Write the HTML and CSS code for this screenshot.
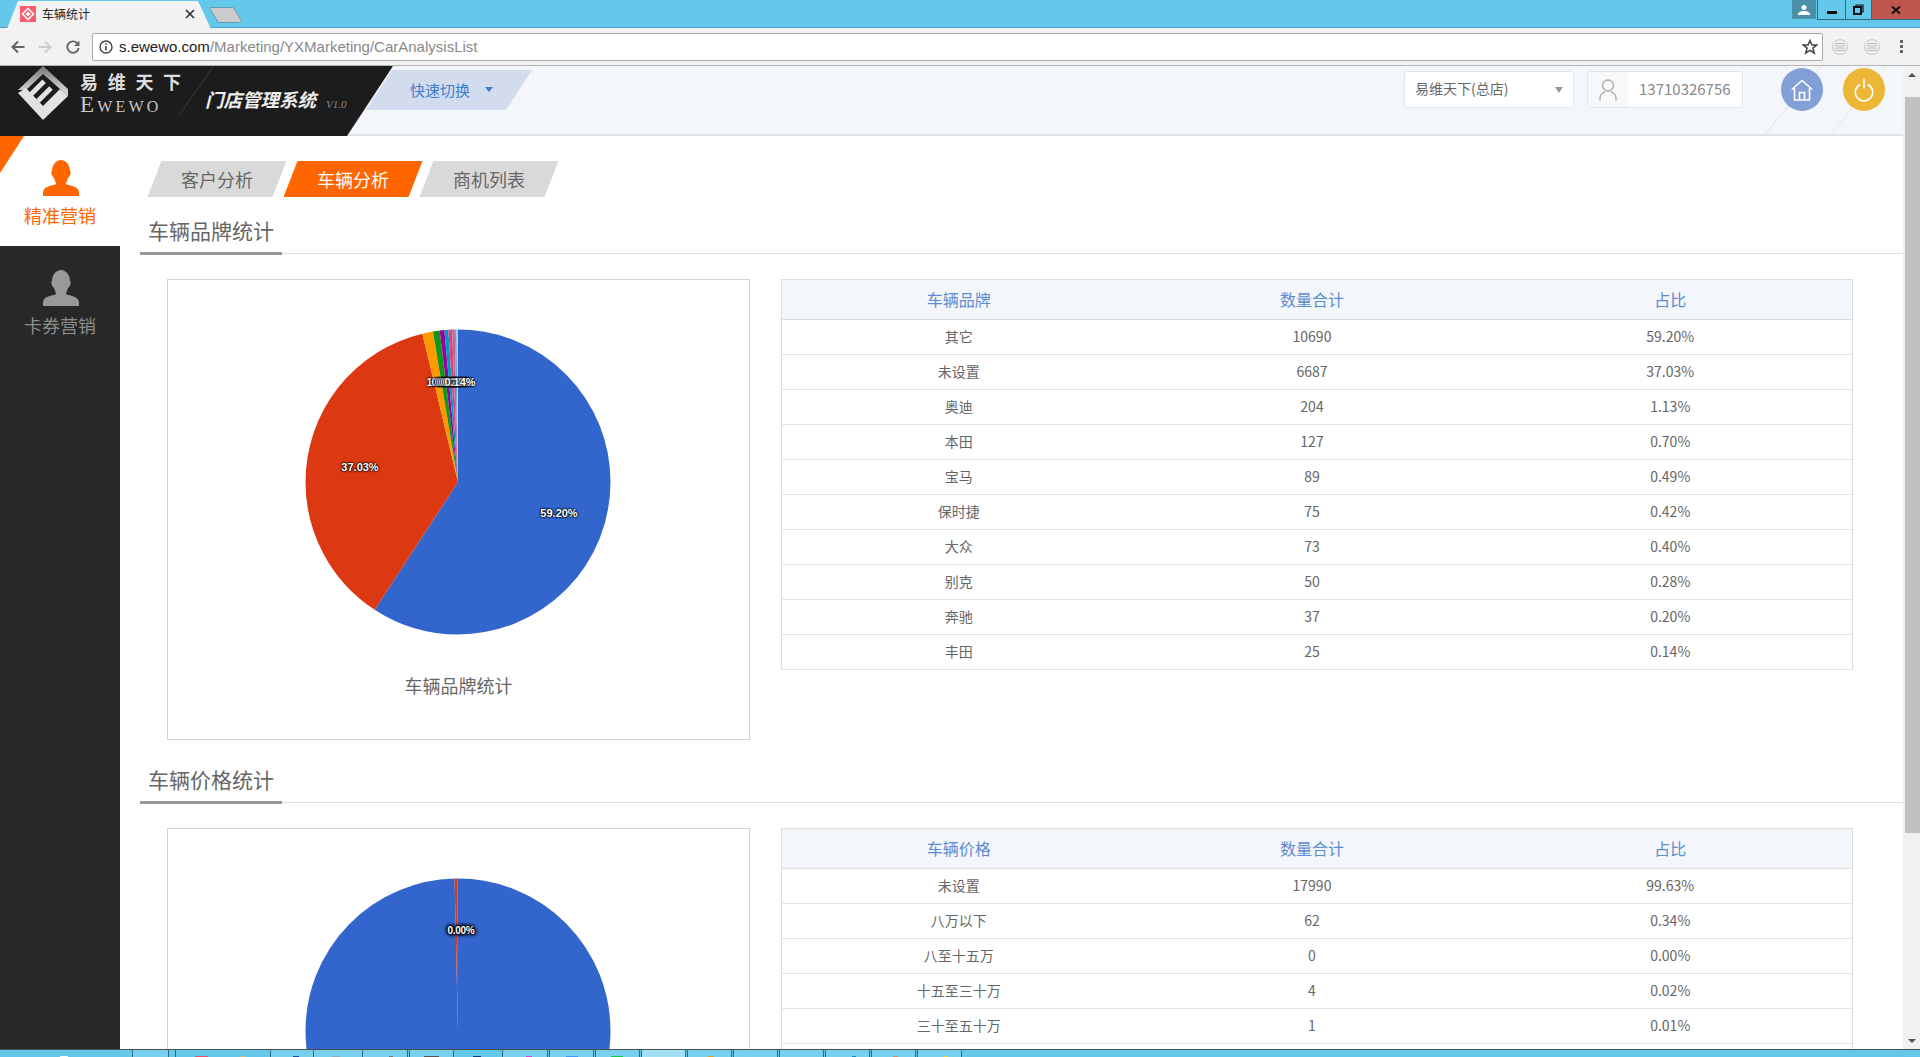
FILE: index.html
```html
<!DOCTYPE html>
<html lang="zh-CN">
  <head>
    <meta charset="UTF-8" />
    <title>车辆统计</title>
    <link rel="stylesheet" href="styles.css">
  </head>
  <body>
    <div class="screen">
      <!-- barra de abas do navegador -->
      <div class="tabstrip">
        <div class="tab">
          <svg class="favicon" viewBox="0 0 16 16">
            <rect width="16" height="16" fill="#fb5b6c"/>
            <path d="M8 2.500 13.500 8 8 13.500 2.500 8Z" fill="none" stroke="#fff" stroke-width="1.600"/>
            <path d="M5.500 8 8 5.500 10.500 8 8 10.500Z" fill="#fff"/>
          </svg>
          <span class="tab-title">车辆统计</span>
          <svg class="tab-close" viewBox="0 0 10 10"><path d="M1 1 9 9M9 1 1 9" stroke="#333" stroke-width="1.700"/></svg>
        </div>
        <svg class="newtab" viewBox="0 0 34 18" width="34" height="18"><path d="M2 1.500H23.500Q25 1.500 25.500 3L32.500 15Q33 16.500 31.500 16.500H10Q9 16.500 8.500 15L1 3Q.8 1.500 2 1.500Z" fill="#cbcbcb" stroke="#5f9db4"/></svg>
        <div class="winctl">
          <div class="win-user">
            <svg viewBox="0 0 12 10" width="12" height="10"><circle cx="6" cy="2.600" r="2.500" fill="#fff"/><path d="M0 10V8.500C1 6.500 4 6 6 6s5 .5 6 2.500V10Z" fill="#fff"/></svg>
          </div>
          <div class="win-btn win-min"><span class="min-bar"></span></div>
          <div class="win-btn win-max">
            <svg viewBox="0 0 11 11" width="11" height="11"><path d="M3 3V1h7v7H8" fill="none" stroke="#111" stroke-width="1.200"/><rect x="1" y="3" width="7" height="7" fill="none" stroke="#111" stroke-width="2"/></svg>
          </div>
          <div class="win-btn win-close">
            <svg viewBox="0 0 10 8" width="10" height="8"><path d="M1 .5 9 7.500M9 .5 1 7.500" stroke="#111" stroke-width="2"/></svg>
          </div>
        </div>
      </div>

      <div class="toolbar">
        <svg class="nav-icon" viewBox="0 0 14 14"><path d="M13.500 7H2M7 1.500 1.500 7 7 12.500" fill="none" stroke="#666" stroke-width="2"/></svg>
        <svg class="nav-icon nav-fwd" viewBox="0 0 14 14"><path d="M.5 7H12M7 1.500 12.500 7 7 12.500" fill="none" stroke="#ccc" stroke-width="2"/></svg>
        <svg class="nav-icon nav-reload" viewBox="0 0 14 14"><path d="M12 4.200A5.700 5.700 0 1 0 12.700 8" fill="none" stroke="#666" stroke-width="1.900"/><path d="M13.500 .5V6H8Z" fill="#666"/></svg>
        <div class="urlbar">
          <svg class="url-info" viewBox="0 0 14 14"><circle cx="7" cy="7" r="6" fill="none" stroke="#444" stroke-width="1.400"/><path d="M7 6v4.500M7 3.300v1.500" stroke="#444" stroke-width="1.600"/></svg>
          <span class="url-text"><b class="url-host">s.ewewo.com</b>/Marketing/YXMarketing/CarAnalysisList</span>
          <svg class="url-star" viewBox="0 0 16 16"><path d="M8 1.500 9.900 6h4.800l-3.800 3.100 1.400 4.900L8 11.300 3.700 14l1.400-4.900L1.300 6h4.800Z" fill="none" stroke="#444" stroke-width="1.500"/></svg>
        </div>
        <svg class="ext-icon ext-first" viewBox="0 0 16 16"><circle cx="8" cy="8" r="7.400" fill="none" stroke="#c4c4c4"/><path d="M4 4.500h8v2.500H4ZM4 9h8v2.500H4Z" fill="none" stroke="#bbb"/></svg>
        <svg class="ext-icon" viewBox="0 0 16 16"><circle cx="8" cy="8" r="7.400" fill="none" stroke="#c4c4c4"/><path d="M4 4.500h8v2.500H4ZM4 9h8v2.500H4Z" fill="none" stroke="#bbb"/></svg>
        <div class="menu-dots"><i></i><i></i><i></i></div>
      </div>

      <div class="viewport">
        <div class="page">
          <header class="topbar">
            <svg class="rays" viewBox="0 0 203 68" width="203" height="68">
              <path d="M121 0 65 68" stroke="#dfe3f3" fill="none"/>
              <path d="M187 0 131 68" stroke="#f3e6cf" fill="none"/>
            </svg>
            <div class="logo">
              <svg class="logo-mark" viewBox="0 0 50 54">
                <defs>
                  <linearGradient id="roof" x1="0" y1="0" x2="0" y2="1">
                    <stop offset="0" stop-color="#777"/>
                    <stop offset="1" stop-color="#e4e4e4"/>
                  </linearGradient>
                </defs>
                <polygon points="25,0 50,23 50,30 25,8 8,24 0,24" fill="url(#roof)"/>
                <polygon points="0,27 8,22 25,40 42,23 50,30 25,54" fill="#e2e2e2"/>
                <polygon points="21.700,36.700 18.200,33.200 31.200,20.200 34.700,23.700" fill="#e2e2e2"/>
                <polygon points="14.900,29.900 11.400,26.400 24.400,13.400 27.900,16.900" fill="#e2e2e2"/>
              </svg>
              <div class="brand">
                <div class="brand-cn">易维天下</div>
                <div class="brand-en">Ewewo</div>
              </div>
              <svg class="logo-slash" viewBox="0 0 36 50" width="36" height="50"><path d="M35.500 0 .5 50" stroke="#3c3c3c" fill="none"/></svg>
              <span class="slogan">门店管理系统</span>
              <span class="version">V1.0</span>
            </div>
            <div class="quick">快速切换<span class="quick-caret"></span></div>
            <div class="topbar-right">
              <div class="shop-select">易维天下(总店)<span class="select-caret"></span></div>
              <div class="user-box">
                <div class="user-ico">
                  <svg viewBox="0 0 18 22" width="18" height="22"><circle cx="9" cy="6.500" r="5.500" fill="none" stroke="#a6a6a6" stroke-width="1.300"/><path d="M1 21.500V19c0-3.500 3-5.500 5.500-6.500M17 21.500V19c0-3.500-3-5.500-5.500-6.500" fill="none" stroke="#a6a6a6" stroke-width="1.300"/></svg>
                </div>
                <span class="user-num">13710326756</span>
              </div>
              <div class="round round-home">
                <svg viewBox="0 0 22 22" width="22" height="22"><path d="M.8 10.500 11 1.500l10.200 9M3.500 9v12h15V9M8.500 21v-7.500h5V21" fill="none" stroke="#fff" stroke-width="1.600"/></svg>
              </div>
              <div class="round round-power">
                <svg viewBox="0 0 20 24" width="20" height="24"><path d="M6 6.500a8.700 8.700 0 1 0 8 0M10 .5v10" fill="none" stroke="#fff" stroke-width="1.600"/></svg>
              </div>
            </div>
          </header>

          <div class="content">
            <nav class="sidebar">
              <span class="side-corner"></span>
              <a class="side-item active">
                <svg class="side-ico" viewBox="0 0 36 36"><path d="M18 0C23 0 27 5 27 11C27.500 11 28 12 27.500 14C27 16 26 17 25 18C24 21 23 23 23 24C25 26 35 25 36 32V36H0V32C1 25 11 26 13 24C13 23 12 21 11 18C10 17 9 16 8.500 14C8 12 8.500 11 9 11C9 5 13 0 18 0Z"/></svg>
                <span>精准营销</span>
              </a>
              <a class="side-item">
                <svg class="side-ico" viewBox="0 0 36 36"><path d="M18 0C23 0 27 5 27 11C27.500 11 28 12 27.500 14C27 16 26 17 25 18C24 21 23 23 23 24C25 26 35 25 36 32V36H0V32C1 25 11 26 13 24C13 23 12 21 11 18C10 17 9 16 8.500 14C8 12 8.500 11 9 11C9 5 13 0 18 0Z"/></svg>
                <span>卡券营销</span>
              </a>
            </nav>

            <main class="main">
              <div class="tabs">
                <a class="tabs-item">客户分析</a>
                <a class="tabs-item on">车辆分析</a>
                <a class="tabs-item">商机列表</a>
              </div>

              <section class="block">
                <h3 class="block-title"><span>车辆品牌统计</span></h3>
                <div class="block-row">
                  <div class="chart">
                    <div class="pie">
                      <svg viewBox="0 0 306 306" width="306" height="306">
                        <g transform="rotate(-90 153 153)" fill="none" stroke-width="152.500">
                          <circle class="c1" cx="153" cy="153" r="76.250" pathLength="100" stroke-dasharray="59.2 100"/>
                          <circle class="c2" cx="153" cy="153" r="76.250" pathLength="100" stroke-dasharray="37.03 100" stroke-dashoffset="-59.2"/>
                          <circle class="c3" cx="153" cy="153" r="76.250" pathLength="100" stroke-dasharray="1.13 100" stroke-dashoffset="-96.23"/>
                          <circle class="c4" cx="153" cy="153" r="76.250" pathLength="100" stroke-dasharray="0.7 100" stroke-dashoffset="-97.36"/>
                          <circle class="c5" cx="153" cy="153" r="76.250" pathLength="100" stroke-dasharray="0.49 100" stroke-dashoffset="-98.06"/>
                          <circle class="c6" cx="153" cy="153" r="76.250" pathLength="100" stroke-dasharray="0.42 100" stroke-dashoffset="-98.55"/>
                          <circle class="c7" cx="153" cy="153" r="76.250" pathLength="100" stroke-dasharray="0.4 100" stroke-dashoffset="-98.97"/>
                          <circle class="c8" cx="153" cy="153" r="76.250" pathLength="100" stroke-dasharray="0.28 100" stroke-dashoffset="-99.37"/>
                          <circle class="c9" cx="153" cy="153" r="76.250" pathLength="100" stroke-dasharray="0.2 100" stroke-dashoffset="-99.65"/>
                          <circle class="c10" cx="153" cy="153" r="76.250" pathLength="100" stroke-dasharray="0.15 100" stroke-dashoffset="-99.85"/>
                        </g>
                      </svg>
                      <span class="pie-label lb-a">59.20%</span>
                      <span class="pie-label lb-b">37.03%</span>
                      <span class="pie-label lb-c1">1.13%</span>
                      <span class="pie-label lb-c2">0.70%</span>
                      <span class="pie-label lb-c3">0.49%</span>
                      <span class="pie-label lb-c4">0.42%</span>
                      <span class="pie-label lb-c5">0.40%</span>
                      <span class="pie-label lb-c6">0.28%</span>
                      <span class="pie-label lb-c7">0.20%</span>
                      <span class="pie-label lb-c8">0.14%</span>
                    </div>
                    <p class="chart-name">车辆品牌统计</p>
                  </div>
                  <table class="stat">
                    <thead>
                      <tr><th class="col-a">车辆品牌</th><th class="col-b">数量合计</th><th class="col-c">占比</th></tr>
                    </thead>
                    <tbody>
                      <tr><td>其它</td><td>10690</td><td>59.20%</td></tr>
                      <tr><td>未设置</td><td>6687</td><td>37.03%</td></tr>
                      <tr><td>奥迪</td><td>204</td><td>1.13%</td></tr>
                      <tr><td>本田</td><td>127</td><td>0.70%</td></tr>
                      <tr><td>宝马</td><td>89</td><td>0.49%</td></tr>
                      <tr><td>保时捷</td><td>75</td><td>0.42%</td></tr>
                      <tr><td>大众</td><td>73</td><td>0.40%</td></tr>
                      <tr><td>别克</td><td>50</td><td>0.28%</td></tr>
                      <tr><td>奔驰</td><td>37</td><td>0.20%</td></tr>
                      <tr><td>丰田</td><td>25</td><td>0.14%</td></tr>
                    </tbody>
                  </table>
                </div>
              </section>

              <section class="block">
                <h3 class="block-title"><span>车辆价格统计</span></h3>
                <div class="block-row">
                  <div class="chart">
                    <div class="pie">
                      <svg viewBox="0 0 306 306" width="306" height="306">
                        <g transform="rotate(-90 153 153)" fill="none" stroke-width="152.500">
                          <circle class="c1" cx="153" cy="153" r="76.250" pathLength="100" stroke-dasharray="99.63 100"/>
                          <circle class="c2" cx="153" cy="153" r="76.250" pathLength="100" stroke-dasharray="0.34 100" stroke-dashoffset="-99.63"/>
                          <circle class="c4" cx="153" cy="153" r="76.250" pathLength="100" stroke-dasharray="0.03 100" stroke-dashoffset="-99.97"/>
                        </g>
                      </svg>
                      <span class="pie-label lb-zero">0.00%</span>
                    </div>
                  </div>
                  <table class="stat">
                    <thead>
                      <tr><th class="col-a">车辆价格</th><th class="col-b">数量合计</th><th class="col-c">占比</th></tr>
                    </thead>
                    <tbody>
                      <tr><td>未设置</td><td>17990</td><td>99.63%</td></tr>
                      <tr><td>八万以下</td><td>62</td><td>0.34%</td></tr>
                      <tr><td>八至十五万</td><td>0</td><td>0.00%</td></tr>
                      <tr><td>十五至三十万</td><td>4</td><td>0.02%</td></tr>
                      <tr><td>三十至五十万</td><td>1</td><td>0.01%</td></tr>
                      <tr><td></td><td></td><td></td></tr>
                    </tbody>
                  </table>
                </div>
              </section>
            </main>
          </div>
        </div>

        <div class="scrollbar">
          <div class="sb-btn"><span class="sb-up"></span></div>
          <div class="sb-thumb"></div>
          <div class="sb-btn sb-bottom"><span class="sb-down"></span></div>
        </div>
      </div>

      <!-- barra de tarefas, so aparece a beirada -->
      <div class="taskbar">
        <div class="task t-start"><i class="tip tip-start"></i></div>
        <div class="task t-quick"></div>
        <div class="t-sep"></div>
        <div class="task t-a"><i class="tip tip-a1"></i><i class="tip tip-a2"></i></div>
        <div class="task t-b light"><i class="tip tip-b"></i></div>
        <div class="task t-c light"><i class="tip tip-c"></i></div>
        <div class="task t-d light"><i class="tip tip-d"></i></div>
        <div class="task t-d light gap"><i class="tip tip-e"></i></div>
        <div class="task t-c"><i class="tip tip-f"></i></div>
        <div class="task t-d light"><i class="tip tip-g"></i></div>
        <div class="task t-d light gap"><i class="tip tip-h"></i></div>
        <div class="task t-d light gap"><i class="tip tip-i"></i></div>
        <div class="task t-d now gap"></div>
        <div class="task t-d light gap"><i class="tip tip-j"></i></div>
        <div class="task t-d light gap"></div>
        <div class="task t-d light gap"></div>
        <div class="task t-d light gap"><i class="tip tip-k"></i></div>
        <div class="task t-d light gap"><i class="tip tip-l"></i></div>
        <div class="task t-d light gap"><i class="tip tip-m"></i></div>
      </div>
    </div>
  </body>
</html>
```

FILE: styles.css
```css
* {
  box-sizing: border-box;
}

body {
  margin: 0;
  font-family: "Noto Sans CJK SC", "Liberation Sans", sans-serif;
  color: #666;
  background: #fff;
}

.screen {
  height: 100vh;
  display: flex;
  flex-direction: column;
  overflow: hidden;
}

/* abas */
.tabstrip {
  height: 28px;
  flex: none;
  display: flex;
  align-items: flex-start;
  background: #64c8ea;
  border-bottom: 1px solid #4a9fbd;
}

.tab {
  width: 204px;
  height: 28px;
  margin: 1px 0 0 7px;
  padding-left: 13px;
  display: flex;
  align-items: center;
  background: #f2f2f2;
  clip-path: polygon(11px 0, 191px 0, 100% 100%, 0 100%);
}

.favicon {
  width: 16px;
  height: 16px;
  margin-top: -3px;
}

.tab-title {
  margin: -3px 0 0 6px;
  font-size: 12px;
  color: #222;
}

.tab-close {
  width: 10px;
  height: 10px;
  margin: -3px 0 0 95px;
}

.newtab {
  flex: none;
  margin: 6px 0 0 -2px;
}

.winctl {
  margin-left: auto;
  display: flex;
  height: 20px;
}

.win-user {
  width: 24px;
  height: 19px;
  margin-right: 1px;
  display: flex;
  align-items: center;
  justify-content: center;
  background: #4a90a8;
}

.win-btn {
  display: flex;
  align-items: center;
  justify-content: center;
  height: 20px;
  border-bottom: 1px solid #2f6a7e;
  border-left: 1px solid #2f6a7e;
}

.win-min {
  width: 28px;
}

.min-bar {
  width: 10px;
  height: 3px;
  margin-top: 6px;
  background: #111;
}

.win-max {
  width: 26px;
}

.win-close {
  width: 49px;
  background: #c0574f;
}

.toolbar {
  height: 38px;
  flex: none;
  display: flex;
  align-items: center;
  background: #f2f2f2;
  border-bottom: 1px solid #b4b4b4;
}

.nav-icon {
  width: 14px;
  height: 14px;
  margin-left: 11px;
}

.nav-fwd {
  margin-left: 13px;
}

.nav-reload {
  margin-left: 14px;
}

.urlbar {
  width: 1731px;
  height: 28px;
  margin-left: 12px;
  padding: 0 6px;
  display: flex;
  align-items: center;
  background: #fff;
  border: 1px solid #aaa;
  border-radius: 2px;
}

.url-info {
  width: 14px;
  height: 14px;
}

.url-text {
  margin-left: 6px;
  font-family: "Liberation Sans", sans-serif;
  font-size: 15px;
  color: #888;
}

.url-host {
  font-weight: normal;
  color: #222;
}

.url-star {
  width: 16px;
  height: 16px;
  margin-left: auto;
  margin-right: -2px;
}

.ext-icon {
  width: 16px;
  height: 16px;
  margin-left: 16px;
}

.ext-first {
  margin-left: 9px;
}

.menu-dots {
  margin-left: 20px;
  display: flex;
  flex-direction: column;
  gap: 2px;
}

.menu-dots i {
  width: 3px;
  height: 3px;
  background: #666;
}

/* area da pagina */
.viewport {
  flex: 1;
  min-height: 0;
  display: flex;
}

.page {
  flex: 1;
  min-width: 0;
  display: flex;
  flex-direction: column;
}

.topbar {
  position: relative;
  height: 70px;
  flex: none;
  display: flex;
  align-items: flex-start;
  background: #f3f6fa;
  border-bottom: 2px solid #e0e3e6;
}

.rays {
  position: absolute;
  right: 0;
  top: 0;
}

.logo {
  position: relative;
  width: 393px;
  height: 70px;
  flex: none;
  padding-left: 18px;
  display: flex;
  align-items: flex-start;
  background: #1c1c1c;
  clip-path: polygon(0 0, 100% 0, 347px 100%, 0 100%);
}

.logo-mark {
  width: 50px;
  height: 54px;
  flex: none;
}

.brand {
  margin-left: 12px;
  color: #ddd;
}

.brand-cn {
  margin-top: 3px;
  font-size: 18px;
  line-height: 24px;
  font-weight: bold;
  letter-spacing: 9.700px;
  white-space: nowrap;
}

.brand-en {
  margin-top: -1px;
  font-family: "Liberation Serif", serif;
  font-size: 23px;
  line-height: 25px;
  font-variant: small-caps;
  letter-spacing: 3.200px;
  color: #c8c8c8;
}

.logo-slash {
  position: absolute;
  left: 178px;
  top: 0;
}

.slogan {
  position: absolute;
  left: 205px;
  top: 21px;
  font-size: 18.500px;
  line-height: 24px;
  font-style: italic;
  font-weight: bold;
  color: #eee;
  white-space: nowrap;
}

.version {
  position: absolute;
  left: 326px;
  top: 32px;
  font-family: "Liberation Serif", serif;
  font-size: 11px;
  line-height: 12px;
  font-style: italic;
  color: #888;
}

.quick {
  width: 166px;
  height: 40px;
  flex: none;
  margin: 4px 0 0 -27px;
  padding: 0 0 2px 44px;
  display: flex;
  align-items: center;
  font-size: 15px;
  color: #3d7fc8;
  background: #d3dcee;
  clip-path: polygon(26px 0, 100% 0, 140px 100%, 0 100%);
}

.quick-caret {
  width: 0;
  height: 0;
  margin-left: 15px;
  border-left: 4px solid transparent;
  border-right: 4px solid transparent;
  border-top: 5px solid #3d7fc8;
}

.topbar-right {
  margin-left: auto;
  padding-right: 18px;
  display: flex;
  align-items: flex-start;
}

.shop-select {
  width: 170px;
  height: 37px;
  margin-top: 5px;
  padding: 0 0 3px 10px;
  display: flex;
  align-items: center;
  font-size: 14px;
  color: #666;
  background: #fff;
  border: 1px solid #e3e6ea;
  border-radius: 3px;
}

.select-caret {
  width: 0;
  height: 0;
  margin: 3px 10px 0 auto;
  border-left: 4px solid transparent;
  border-right: 4px solid transparent;
  border-top: 6px solid #999;
}

.user-box {
  width: 156px;
  height: 37px;
  margin: 5px 0 0 13px;
  display: flex;
  align-items: stretch;
  background: #fff;
  border: 1px solid #e3e6ea;
  border-radius: 3px;
  overflow: hidden;
}

.user-ico {
  width: 40px;
  display: flex;
  align-items: center;
  justify-content: center;
  background: #f6f8fa;
}

.user-num {
  margin-left: 11px;
  font-size: 15px;
  line-height: 33px;
  color: #888;
}

.round {
  position: relative;
  width: 42px;
  height: 43px;
  margin-top: 2px;
  display: flex;
  align-items: center;
  justify-content: center;
  border-radius: 50%;
}

.round-home {
  margin-left: 38px;
  background: #829fd8;
}

.round-power {
  margin-left: 20px;
  background: #ecb736;
}

.content {
  flex: 1;
  min-height: 0;
  display: flex;
}

.sidebar {
  position: relative;
  width: 120px;
  flex: none;
  background: #282828;
}

.side-corner {
  position: absolute;
  left: 0;
  top: 0;
  width: 24px;
  height: 37px;
  background: #ff6600;
  clip-path: polygon(0 0, 100% 0, 0 100%);
}

.side-item {
  height: 110px;
  padding-top: 24px;
  display: flex;
  flex-direction: column;
  align-items: center;
  font-size: 18px;
  line-height: 24px;
  color: #8c8c8c;
}

.side-item.active {
  color: #ff6600;
  background: #fff;
}

.side-ico {
  width: 36px;
  height: 36px;
  margin: 0 0 7px 2px;
  fill: #999;
}

.active .side-ico {
  fill: #ff6600;
}

.main {
  flex: 1;
  min-width: 0;
  overflow: hidden;
}

.tabs {
  margin: 25px 0 0 27.500px;
  display: flex;
}

.tabs-item {
  width: 139px;
  height: 36px;
  margin-right: -3px;
  display: flex;
  align-items: center;
  justify-content: center;
  font-size: 18px;
  color: #666;
  background: #d9d9d9;
  clip-path: polygon(14px 0, 100% 0, 125px 100%, 0 100%);
}

.tabs-item.on {
  color: #fff;
  background: #ff6600;
}

.block-title {
  height: 44px;
  margin: 13px 0 0 20px;
  display: flex;
  align-items: flex-end;
  font-size: 21px;
  font-weight: normal;
  color: #666;
  border-bottom: 1px solid #ddd;
}

.block-title span {
  width: 142px;
  height: 45px;
  margin-bottom: -2px;
  padding-left: 8px;
  line-height: 40px;
  white-space: nowrap;
  border-bottom: 3px solid #999;
}

.block-row {
  margin: 25px 0 19px 47px;
  display: flex;
  align-items: flex-start;
}

.block:last-child .block-row {
  margin-bottom: 0;
}

.block + .block .block-title {
  margin-top: 0;
}

.chart {
  width: 583px;
  height: 461px;
  flex: none;
  padding-top: 49px;
  display: flex;
  flex-direction: column;
  align-items: center;
  border: 1px solid #d2d2d2;
}

.pie {
  position: relative;
  width: 306px;
  height: 306px;
  flex: none;
  margin-right: 1px;
}

.pie svg {
  display: block;
}

.c1 { stroke: #3366cc; }
.c2 { stroke: #dc3912; }
.c3 { stroke: #ff9900; }
.c4 { stroke: #109618; }
.c5 { stroke: #990099; }
.c6 { stroke: #0099c6; }
.c7 { stroke: #dd4477; }
.c8 { stroke: #b8689c; }
.c9 { stroke: #6f9ed8; }
.c10 { stroke: #a6d8f0; }

.pie-label {
  position: absolute;
  transform: translate(-50%, -50%);
  font-family: "Liberation Sans", sans-serif;
  font-size: 11px;
  font-weight: bold;
  line-height: 12px;
  color: #fff;
  text-shadow: 0 0 2px #000, 0 0 2px #000, 0 0 2px #000;
  white-space: nowrap;
}

.lb-a { left: 254px; top: 184px; }
.lb-b { left: 55px; top: 138px; }
.lb-c1 { left: 137px; top: 53px; }
.lb-c2 { left: 142px; top: 53px; }
.lb-c3 { left: 145px; top: 53px; }
.lb-c4 { left: 147px; top: 53px; }
.lb-c5 { left: 149px; top: 53px; }
.lb-c6 { left: 151px; top: 53px; }
.lb-c7 { left: 153px; top: 53px; }
.lb-c8 { left: 155px; top: 53px; }

.lb-zero {
  left: 156px;
  top: 53px;
  font-size: 10px;
  letter-spacing: -0.300px;
  text-shadow: 0 0 2px #000, 0 0 3px #000, 0 0 3px #000, 0 0 4px #000, 0 0 4px #000, 0 0 4px #000;
}

.chart-name {
  margin: 38px 0 0;
  font-size: 18px;
  line-height: 24px;
  color: #666;
}

.stat {
  width: 1071px;
  margin-left: 31px;
  flex: none;
  border-collapse: collapse;
  table-layout: fixed;
  border: 1px solid #ddd;
}

.stat th {
  height: 40px;
  padding: 0 0 2px;
  font-size: 16px;
  font-weight: normal;
  color: #5b8bd0;
  background: #f3f6fa;
  border-bottom: 1px solid #dcdcdc;
}

.stat td {
  height: 35px;
  padding: 0 0 2px;
  font-size: 14px;
  text-align: center;
  color: #666;
  border-bottom: 1px solid #e4e4e4;
}

.col-a { width: 354px; }
.col-b { width: 353px; }
.col-c { width: 364px; }

/* barra de rolagem */
.scrollbar {
  width: 17px;
  flex: none;
  display: flex;
  flex-direction: column;
  background: #f1f1f1;
}

.sb-btn {
  height: 17px;
  flex: none;
  display: flex;
  align-items: center;
  justify-content: center;
}

.sb-bottom {
  margin-top: auto;
}

.sb-up,
.sb-down {
  width: 0;
  height: 0;
  border-left: 4px solid transparent;
  border-right: 4px solid transparent;
}

.sb-up {
  border-bottom: 4px solid #505050;
}

.sb-down {
  border-top: 4px solid #505050;
}

.sb-thumb {
  height: 736px;
  margin: 14px 0 0 2px;
  background: #c1c1c1;
}

/* barra de tarefas */
.taskbar {
  height: 8px;
  flex: none;
  display: flex;
  align-items: stretch;
  background: #64c8ea;
  border-top: 1px solid #4d4d4d;
}

.task {
  position: relative;
  flex: none;
  border-right: 1px solid #2f6a7e;
}

.task.light {
  background: #78d0ee;
}

.task.now {
  background: #a2e0f3;
}

.task.gap {
  margin-left: 1px;
  border-left: 1px solid #2f6a7e;
}

.t-start { width: 133px; }
.t-quick { width: 36px; background: #78d0ee; }
.t-sep { width: 7px; border-right: 1px solid #2f6a7e; }
.t-a { width: 95px; }
.t-b { width: 43px; }
.t-c { width: 49px; }
.t-d { width: 45px; }

.tip {
  position: absolute;
  bottom: 0;
  height: 1px;
}

.tip-start { left: 60px; width: 8px; background: #fff; }
.tip-a1 { left: 19px; width: 13px; background: #f0506e; }
.tip-a2 { left: 64px; width: 6px; background: #c8b98a; }
.tip-b { left: 22px; width: 6px; background: #1d4fa8; }
.tip-c { left: 18px; width: 8px; background: #8fb0b8; }
.tip-d { left: 26px; width: 4px; background: #777; }
.tip-e { left: 14px; width: 15px; background: #555; }
.tip-f { left: 19px; width: 8px; background: #0d3f7a; }
.tip-g { left: 23px; width: 6px; background: #d848d8; }
.tip-h { left: 16px; width: 12px; background: #3f9bf5; }
.tip-i { left: 15px; width: 12px; background: #10c850; }
.tip-j { left: 20px; width: 6px; background: #e0a030; }
.tip-k { left: 26px; width: 4px; background: #1b88c8; }
.tip-l { left: 21px; width: 5px; background: #e08860; }
.tip-m { left: 26px; width: 4px; background: #f0d040; }
```
